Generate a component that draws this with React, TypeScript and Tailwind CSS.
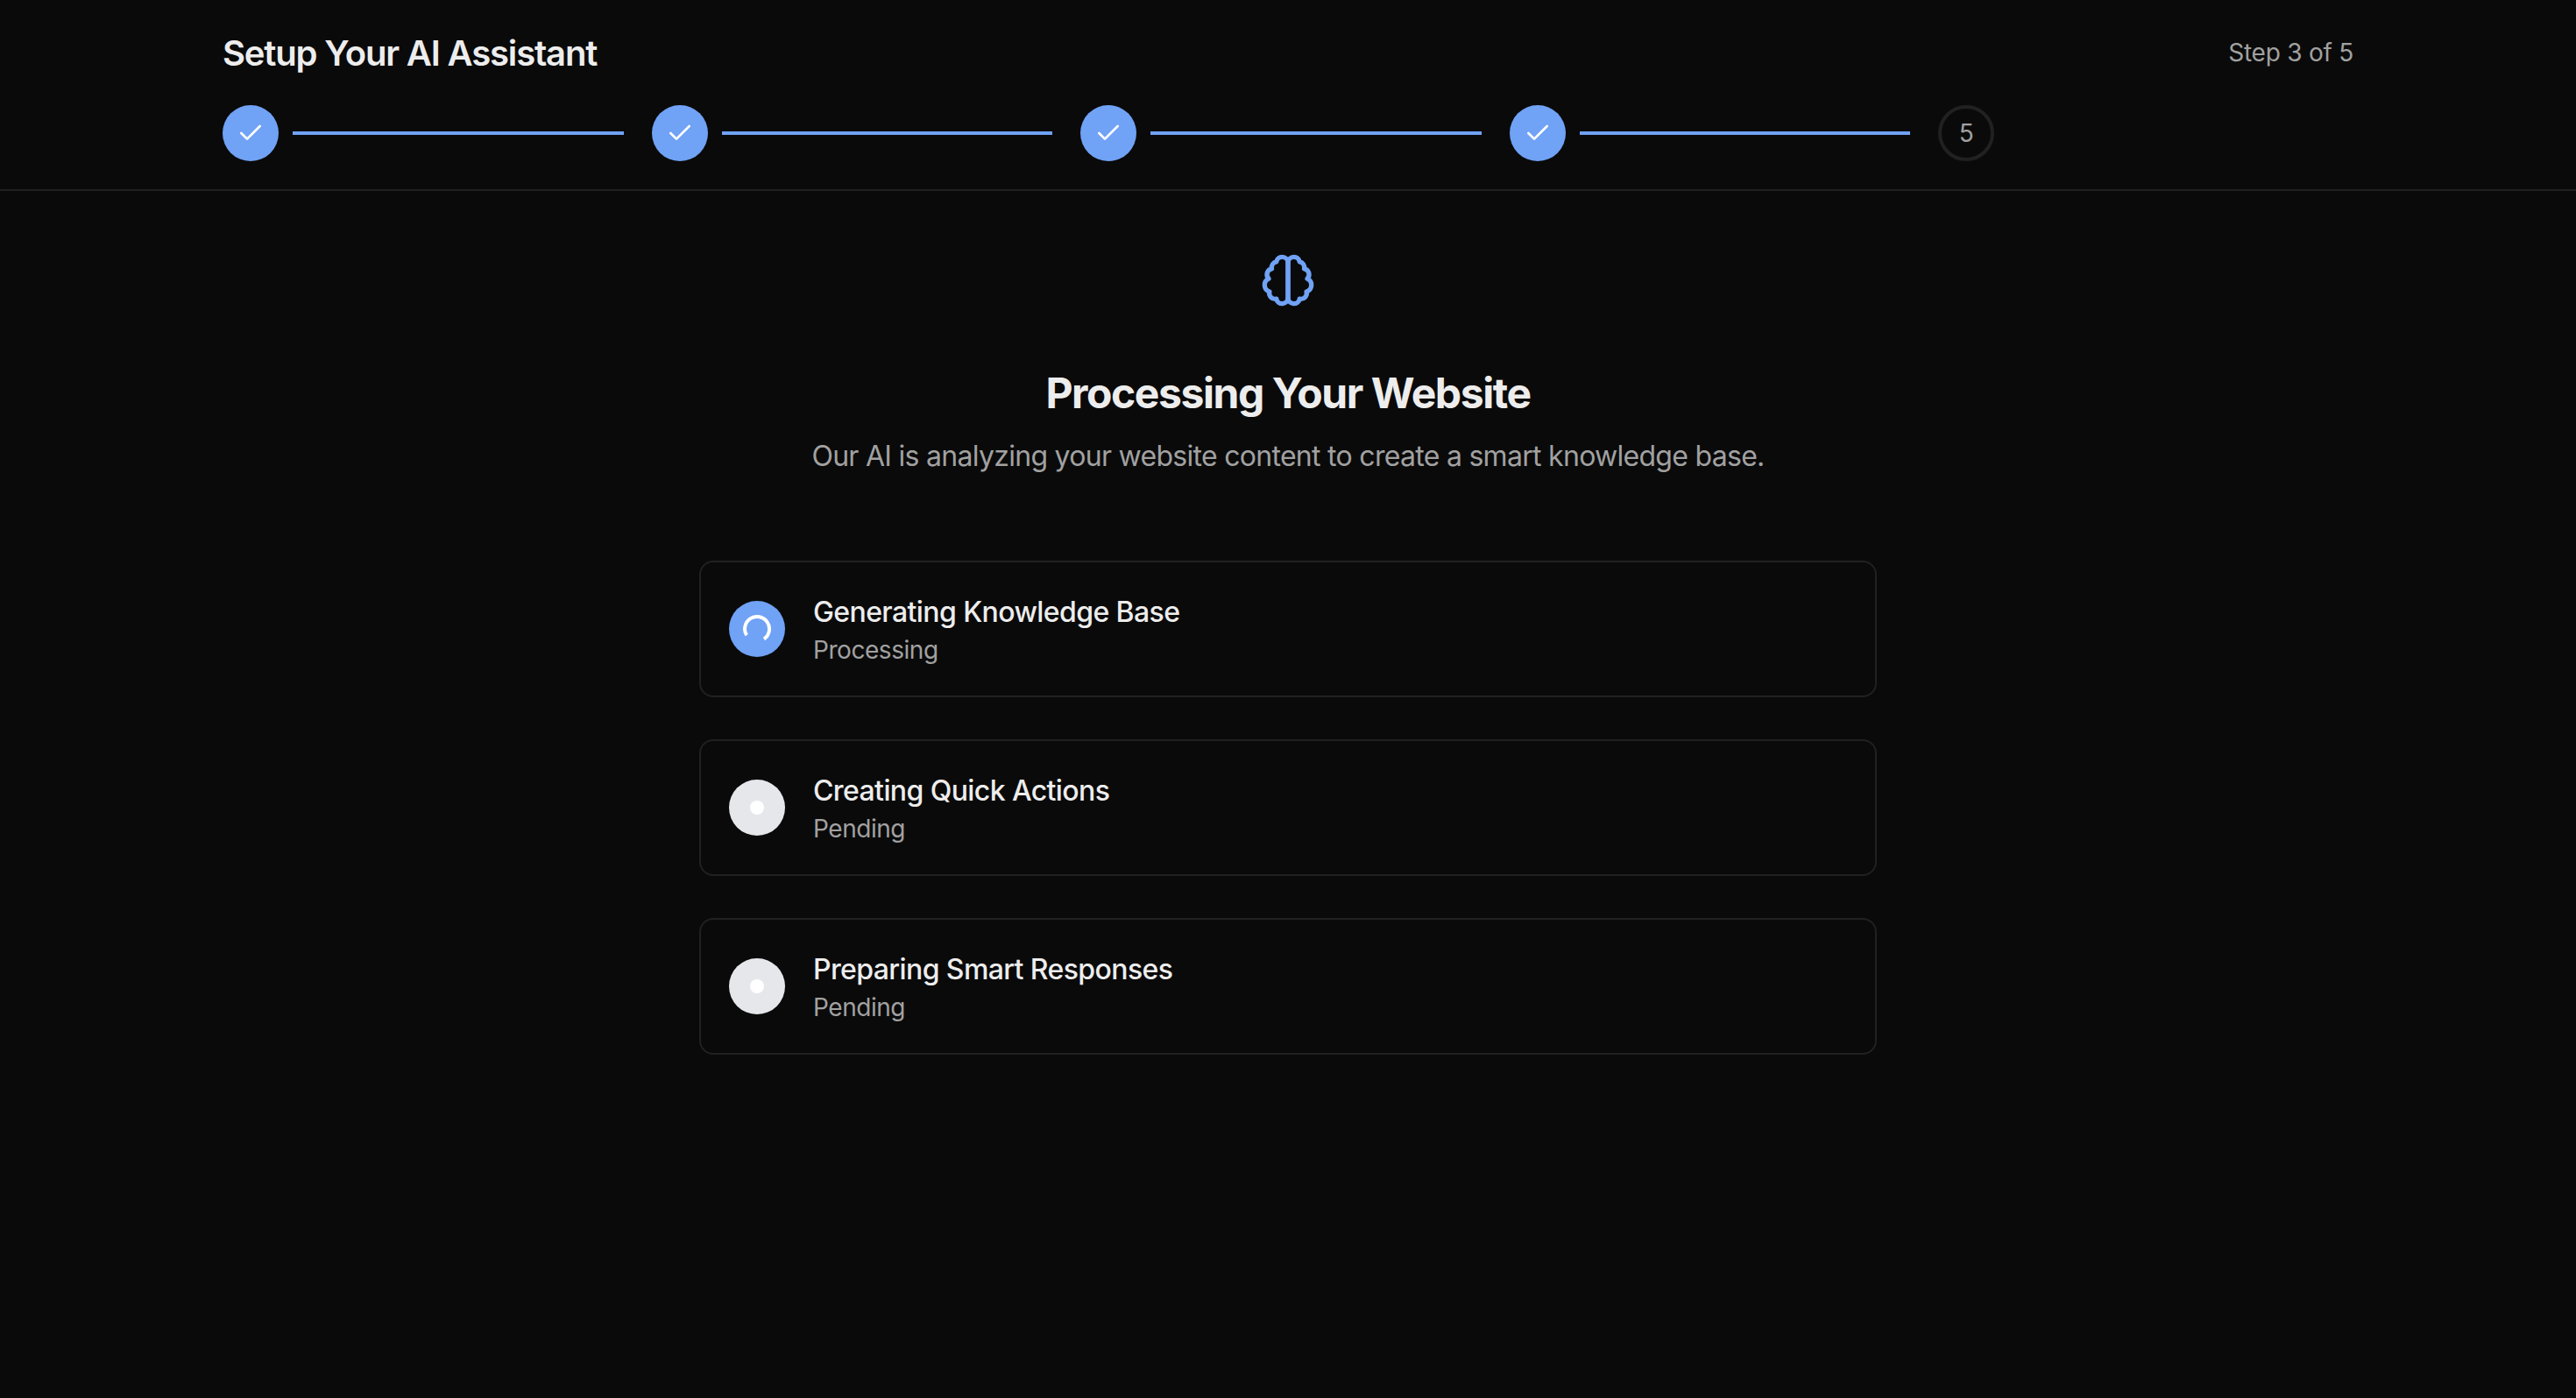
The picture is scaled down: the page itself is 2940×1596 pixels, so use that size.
import React from "react";
import { Check } from "lucide-react";

const steps = [
  { id: 1, done: true },
  { id: 2, done: true },
  { id: 3, done: true },
  { id: 4, done: true },
  { id: 5, done: false },
];

const tasks = [
  { name: "Generating Knowledge Base", status: "Processing" },
  { name: "Creating Quick Actions", status: "Pending" },
  { name: "Preparing Smart Responses", status: "Pending" },
];

const BrainIcon = () => (
  <svg
    viewBox="0 0 24 24"
    fill="none"
    stroke="currentColor"
    strokeWidth={2}
    strokeLinecap="round"
    strokeLinejoin="round"
    className="size-16 text-[#70a2f5]"
  >
    <path d="M9.5 2A2.5 2.5 0 0 1 12 4.5v15a2.5 2.5 0 0 1-4.96.44 2.5 2.5 0 0 1-2.96-3.08 3 3 0 0 1-.34-5.58 2.5 2.5 0 0 1 1.32-4.24 2.5 2.5 0 0 1 1.98-3A2.5 2.5 0 0 1 9.5 2Z" />
    <path d="M14.5 2A2.5 2.5 0 0 0 12 4.5v15a2.5 2.5 0 0 0 4.96.44 2.5 2.5 0 0 0 2.96-3.08 3 3 0 0 0 .34-5.58 2.5 2.5 0 0 0-1.32-4.24 2.5 2.5 0 0 0-1.98-3A2.5 2.5 0 0 0 14.5 2Z" />
  </svg>
);

const Spinner = () => (
  <svg
    viewBox="0 0 32 32"
    fill="none"
    stroke="currentColor"
    strokeWidth={4}
    className="size-8 text-white"
  >
    <path d="M4.1 23.3A14 14 0 1 1 24 27.5" />
  </svg>
);

const App = () => {
  return (
    <div className="min-h-[1596px] bg-[#0a0a0a] font-['Inter',sans-serif] text-[#ededed]">
      <header className="border-b-2 border-[#212121] py-8">
        <div className="mx-auto w-[2432px]">
          <div className="flex items-center justify-between">
            <h1 className="pt-px text-[40px] leading-[55px] font-semibold tracking-[-1.17px]">
              Setup Your AI Assistant
            </h1>
            <span className="text-[28px] leading-10 tracking-[-0.24px] text-[#a1a1a1]">
              Step 3 of 5
            </span>
          </div>
          <div className="mt-8 flex gap-4">
            {steps.map((step) => (
              <div key={step.id} className="flex flex-1 items-center">
                {step.done ? (
                  <>
                    <div className="flex size-16 shrink-0 items-center justify-center rounded-full bg-[#70a2f5]">
                      <Check className="size-8 text-white" />
                    </div>
                    <div className="mx-4 h-1 flex-1 bg-[#70a2f5]" />
                  </>
                ) : (
                  <div className="flex size-16 items-center justify-center rounded-full border-4 border-[#212121] text-[28px] leading-10 text-[#a1a1a1]">
                    {step.id}
                  </div>
                )}
              </div>
            ))}
          </div>
        </div>
      </header>

      <main className="mx-auto flex w-[1344px] flex-col items-center pt-[70px]">
        <BrainIcon />
        <h2 className="mt-16 pt-px text-5xl leading-[63px] font-bold tracking-[-1.43px] whitespace-nowrap">
          Processing Your Website
        </h2>
        <p className="mt-4 pt-px text-[32px] leading-[47px] tracking-[-0.71px] whitespace-nowrap text-[#a1a1a1]">
          Our AI is analyzing your website content to create a smart knowledge base.
        </p>

        <div className="mt-24 flex w-full flex-col gap-12">
          {tasks.map((task) => (
            <div
              key={task.name}
              className="flex items-center gap-8 rounded-2xl border-2 border-[#212121] p-8"
            >
              {task.status === "Processing" ? (
                <div className="flex size-16 items-center justify-center rounded-full bg-[#70a2f5]">
                  <Spinner />
                </div>
              ) : (
                <div className="flex size-16 items-center justify-center rounded-full bg-gray-200">
                  <div className="size-4 rounded-full bg-white" />
                </div>
              )}
              <div>
                <h3 className="pt-px text-[32px] leading-[47px] font-medium tracking-[-0.6px]">
                  {task.name}
                </h3>
                <p className="text-[28px] leading-10 tracking-[-0.45px] text-[#a1a1a1]">
                  {task.status}
                </p>
              </div>
            </div>
          ))}
        </div>
      </main>
    </div>
  );
};

export default App;
